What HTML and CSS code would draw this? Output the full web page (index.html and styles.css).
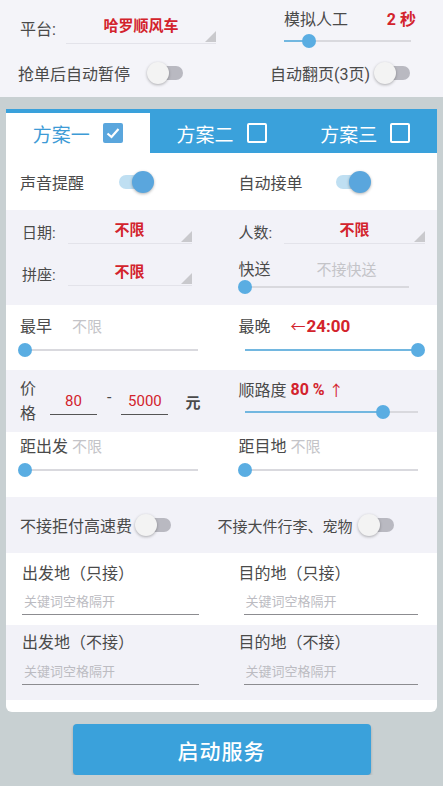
FILE: index.html
```html
<!DOCTYPE html>
<html lang="zh">
<head>
    <meta charset="UTF-8">
    <meta name="viewport" content="width=device-width, initial-scale=1.0">
    <title>抢单设置</title>
    <link rel="stylesheet" href="styles.css">
</head>
<body>
    <div class="top-panel">
        <div class="top-row">
            <div class="top-cell platform">
                <span class="label">平台:</span>
                <div class="select wide"><span class="val">哈罗顺风车</span><i class="caret"></i></div>
            </div>
            <div class="top-cell sim">
                <div class="sim-head"><span class="label">模拟人工</span><span class="red">2 秒</span></div>
                <div class="slider"><div class="fill" style="width: 20%"></div><div class="thumb" style="left: 20%"></div></div>
            </div>
        </div>
        <div class="top-row second">
            <div class="top-cell pause">
                <span class="label">抢单后自动暂停</span>
                <span class="toggle"><i></i></span>
            </div>
            <div class="top-cell flip">
                <span class="label">自动翻页(3页)</span>
                <span class="toggle"><i></i></span>
            </div>
        </div>
    </div>

    <div class="card">
        <div class="tabs">
            <div class="tab active">方案一 <span class="box checked"><svg viewBox="0 0 20 20"><path d="M4.5 10.5 L8.5 14 L15.5 6" fill="none" stroke="#fff" stroke-width="2.2"/></svg></span></div>
            <div class="tab">方案二 <span class="box"></span></div>
            <div class="tab">方案三 <span class="box"></span></div>
        </div>

        <div class="row white r-sound">
            <div class="cell left"><span class="label">声音提醒</span><span class="toggle on"><i></i></span></div>
            <div class="cell right"><span class="label">自动接单</span><span class="toggle on"><i></i></span></div>
        </div>

        <div class="row light r-select">
            <div class="cell left col">
                <div class="field">
                    <span class="label sm">日期:</span>
                    <div class="select"><span class="val">不限</span><i class="caret"></i></div>
                </div>
                <div class="field">
                    <span class="label sm">拼座:</span>
                    <div class="select"><span class="val">不限</span><i class="caret"></i></div>
                </div>
            </div>
            <div class="cell right col">
                <div class="field">
                    <span class="label sm">人数:</span>
                    <div class="select"><span class="val">不限</span><i class="caret"></i></div>
                </div>
                <div class="slide-block express">
                    <div class="head"><span class="label">快送</span><span class="hint">不接快送</span></div>
                    <div class="slider"><div class="thumb" style="left: 0%"></div></div>
                </div>
            </div>
        </div>

        <div class="row white r-time">
            <div class="cell left col">
                <div class="head"><span class="label">最早</span><span class="hint">不限</span></div>
                <div class="slider"><div class="thumb" style="left: 0%"></div></div>
            </div>
            <div class="cell right col">
                <div class="head"><span class="label">最晚</span><span class="late"><span class="arrow">←</span><b>24:00</b></span></div>
                <div class="slider"><div class="fill" style="width: 100%"></div><div class="thumb" style="left: 100%"></div></div>
            </div>
        </div>

        <div class="row light r-price">
            <div class="cell left price">
                <span class="label stack">价<br>格</span>
                <span class="num">80</span>
                <span class="dash">-</span>
                <span class="num">5000</span>
                <span class="unit">元</span>
            </div>
            <div class="cell right col">
                <div class="head"><span class="label">顺路度</span><b class="red">80 %</b><span class="up">↑</span></div>
                <div class="slider"><div class="fill" style="width: 80%"></div><div class="thumb" style="left: 80%"></div></div>
            </div>
        </div>

        <div class="row white r-dist">
            <div class="cell left col">
                <div class="head"><span class="label">距出发</span><span class="hint">不限</span></div>
                <div class="slider"><div class="thumb" style="left: 0%"></div></div>
            </div>
            <div class="cell right col">
                <div class="head"><span class="label">距目地</span><span class="hint">不限</span></div>
                <div class="slider"><div class="thumb" style="left: 0%"></div></div>
            </div>
        </div>

        <div class="row light r-switch">
            <div class="cell left"><span class="label">不接拒付高速费</span><span class="toggle"><i></i></span></div>
            <div class="cell right alt"><span class="label">不接大件行李、宠物</span><span class="toggle"><i></i></span></div>
        </div>

        <div class="row white r-kw">
            <div class="cell left col">
                <span class="label">出发地（只接）</span>
                <div class="kw">关键词空格隔开</div>
            </div>
            <div class="cell right col">
                <span class="label">目的地（只接）</span>
                <div class="kw">关键词空格隔开</div>
            </div>
        </div>

        <div class="row light r-kw2">
            <div class="cell left col">
                <span class="label">出发地（不接）</span>
                <div class="kw">关键词空格隔开</div>
            </div>
            <div class="cell right col">
                <span class="label">目的地（不接）</span>
                <div class="kw">关键词空格隔开</div>
            </div>
        </div>
    </div>

    <div class="actions">
        <button class="start-btn">启动服务</button>
    </div>
</body>
</html>
```

FILE: styles.css
```css
body {
    margin: 0;
    background-color: #c8d0d2;
    font-family: Roboto, "Noto Sans CJK SC", sans-serif;
    color: #4a4a4a;
    font-size: 16px;
}

.label {
    color: #4a4a4a;
    font-size: 16px;
    white-space: nowrap;
}

.label.sm {
    font-size: 15px;
}

.red {
    color: #d3232c;
    font-weight: bold;
}

.hint {
    color: #c4c4c8;
    font-size: 15px;
}

/* top panel */
.top-panel {
    background-color: #f4f4f9;
    height: 97px;
}

.top-row {
    display: flex;
    height: 55px;
}

.top-row.second {
    height: 36px;
    padding-bottom: 6px;
}

.top-cell {
    display: flex;
    align-items: center;
}

.platform {
    width: 222px;
    padding-left: 20px;
    box-sizing: border-box;
}

.platform .select {
    flex: none;
    margin-left: 10px;
    width: 150px;
    height: 32px;
    padding-top: 0;
    line-height: 30px;
}

.sim {
    flex-direction: column;
    align-items: stretch;
    padding-left: 62px;
    padding-top: 6px;
    width: 134px;
    box-sizing: content-box;
}

.sim-head {
    display: flex;
    justify-content: space-between;
    height: 24px;
    align-items: center;
    padding-right: 2px;
}

.sim .slider {
    margin: 10px 0 0 0;
    width: 127px;
}

.pause {
    width: 222px;
    padding-left: 18px;
    box-sizing: border-box;
}

.pause .toggle {
    margin-left: 17px;
}

.flip {
    padding-left: 48px;
}

.flip .toggle {
    margin-left: 4px;
}

/* select */
.select {
    position: relative;
    flex: 1;
    height: 26px;
    padding-top: 4px;
    border-bottom: 1px solid #e3e3ea;
    text-align: center;
    line-height: 26px;
}

.select .val {
    color: #d3232c;
    font-weight: bold;
    font-size: 15px;
}

.select .caret {
    position: absolute;
    right: 0;
    bottom: 1px;
    width: 0;
    height: 0;
    border-left: 11px solid transparent;
    border-bottom: 11px solid #c9c9cd;
}

/* toggle */
.toggle {
    position: relative;
    display: inline-block;
    flex: none;
    width: 36px;
    height: 22px;
}

.toggle::before {
    content: "";
    position: absolute;
    left: 3px;
    right: 0;
    top: 4px;
    height: 14px;
    border-radius: 7px;
    background-color: #b9b9c1;
}

.toggle i {
    position: absolute;
    left: 0;
    top: 0;
    width: 22px;
    height: 22px;
    border-radius: 50%;
    background-color: #f3f3f3;
    box-shadow: 0 1px 3px rgba(0, 0, 0, 0.3);
}

.toggle.on::before {
    background-color: #bfdff2;
}

.toggle.on i {
    left: auto;
    right: -2px;
    background-color: #5aa6dd;
}

/* slider */
.slider {
    position: relative;
    height: 2px;
    background-color: #d9d9de;
}

.slider .fill {
    height: 2px;
    background-color: #72b7e0;
}

.slider .thumb {
    position: absolute;
    top: -6px;
    width: 14px;
    height: 14px;
    margin-left: -7px;
    border-radius: 50%;
    background-color: #5aade2;
}

/* card */
.card {
    margin: 12px 6px 0;
    background-color: #ffffff;
    border-radius: 0 0 6px 6px;
    padding-bottom: 12px;
}

.tabs {
    display: grid;
    grid-template-columns: repeat(3, 1fr);
    background-color: #3aa1db;
    padding-top: 4px;
    height: 40px;
}

.tab {
    display: flex;
    align-items: center;
    justify-content: center;
    gap: 13px;
    color: #ffffff;
    font-size: 19px;
}

.tab.active {
    background-color: #ffffff;
    color: #3d9bd6;
}

.box {
    display: inline-block;
    width: 16px;
    height: 16px;
    border: 2px solid #ffffff;
    border-radius: 2px;
}

.box.checked {
    width: 20px;
    height: 20px;
    border: none;
    background-color: #5aa6dd;
}

.box svg {
    display: block;
    width: 20px;
    height: 20px;
}

.row {
    display: grid;
    grid-template-columns: 1fr 1fr;
}

.row.white {
    background-color: #ffffff;
}

.row.light {
    background-color: #f2f2f8;
}

.cell {
    display: flex;
    align-items: center;
    box-sizing: border-box;
}

.cell.left {
    padding: 0 16px 0 14px;
}

.cell.right {
    padding: 0 17px 0 17px;
}

.cell.col {
    flex-direction: column;
    align-items: stretch;
}

.head {
    display: flex;
    align-items: center;
    gap: 20px;
    height: 24px;
}

.r-sound {
    height: 57px;
}

.r-sound .toggle {
    margin-left: 32px;
}

.r-sound .right .toggle {
    margin-left: 30px;
}

.r-select {
    height: 95px;
}

.r-select .cell.left {
    padding: 3px 30px 0 16px;
}

.r-select .cell.right {
    padding: 3px 12px 0 17px;
}

.field {
    display: flex;
    align-items: flex-end;
    height: 31px;
}

.field + .field {
    margin-top: 11px;
}

.field .label {
    padding-bottom: 2px;
}

.field .select {
    margin-left: 12px;
}

.express {
    margin-top: 12px;
}

.express .head {
    gap: 46px;
}

.express .slider {
    margin: 6px 0 0 6px;
    width: 164px;
}

.r-time {
    height: 65px;
}

.r-time .cell {
    padding-top: 8px;
}

.r-time .cell.left .slider,
.r-dist .cell.left .slider {
    margin: 12px 8px 0 5px;
}

.r-time .cell.right .slider,
.r-dist .cell.right .slider {
    margin: 12px 2px 0 6px;
}

.late {
    color: #d3232c;
    font-size: 15px;
}

.late b {
    font-size: 17px;
}

.late .arrow {
    margin-right: 1px;
}

.r-price {
    height: 62px;
}

.price .stack {
    line-height: 25px;
}

.price .num {
    display: inline-block;
    width: 47px;
    margin-left: 14px;
    border-bottom: 1px solid #555;
    text-align: center;
    color: #d3232c;
    font-size: 15px;
    line-height: 26px;
}

.price .dash {
    margin-left: 10px;
    margin-top: -8px;
}

.price .num + .dash + .num {
    margin-left: 10px;
}

.price .unit {
    margin-left: 17px;
    font-weight: bold;
    font-size: 15px;
}

.r-price .cell.right {
    padding-top: 7px;
}

.r-price .head {
    gap: 4px;
}

.up {
    color: #d3232c;
    font-size: 15px;
}

.r-price .slider {
    margin: 10px 2px 0 6px;
}

.r-dist {
    height: 65px;
}

.r-dist .cell {
    justify-content: flex-start;
    padding-top: 1px;
}

.r-dist .head {
    gap: 4px;
}

.r-switch {
    height: 56px;
}

.r-switch .toggle {
    margin-left: 3px;
}

.r-switch .cell.right.alt {
    padding-left: 0;
    margin-left: -4px;
}

.r-switch .alt .label {
    font-size: 15px;
}

.r-switch .alt .toggle {
    margin-left: 5px;
}

.r-kw,
.r-kw2 {
    height: 72px;
}

.r-kw2 {
    height: 75px;
}

.r-kw .cell,
.r-kw2 .cell {
    justify-content: flex-start;
    padding-top: 7px;
}

.r-kw2 .cell {
    padding-top: 4px;
}

.r-kw .cell.left,
.r-kw2 .cell.left {
    padding-left: 16px;
    padding-right: 23px;
}

.r-kw .cell.right,
.r-kw2 .cell.right {
    padding-left: 17px;
    padding-right: 19px;
}

.kw {
    margin-top: 8px;
    padding: 0 0 2px 2px;
    font-size: 13px;
    color: #bcbcc2;
    border-bottom: 1px solid #8c8c90;
    line-height: 20px;
    margin-left: 5px;
}

.r-kw2 .kw {
    margin-top: 9px;
}

.cell.left .kw {
    margin-left: 0;
}

/* button */
.actions {
    display: flex;
    justify-content: center;
    padding-top: 12px;
}

.start-btn {
    width: 298px;
    height: 51px;
    border: none;
    border-radius: 4px;
    background-color: #3aa1db;
    color: #ffffff;
    font-family: Roboto, "Noto Sans CJK SC", sans-serif;
    font-size: 21px;
    font-weight: 500;
    letter-spacing: 1px;
    box-shadow: 0 2px 3px rgba(0, 0, 0, 0.2);
    cursor: pointer;
}
```
